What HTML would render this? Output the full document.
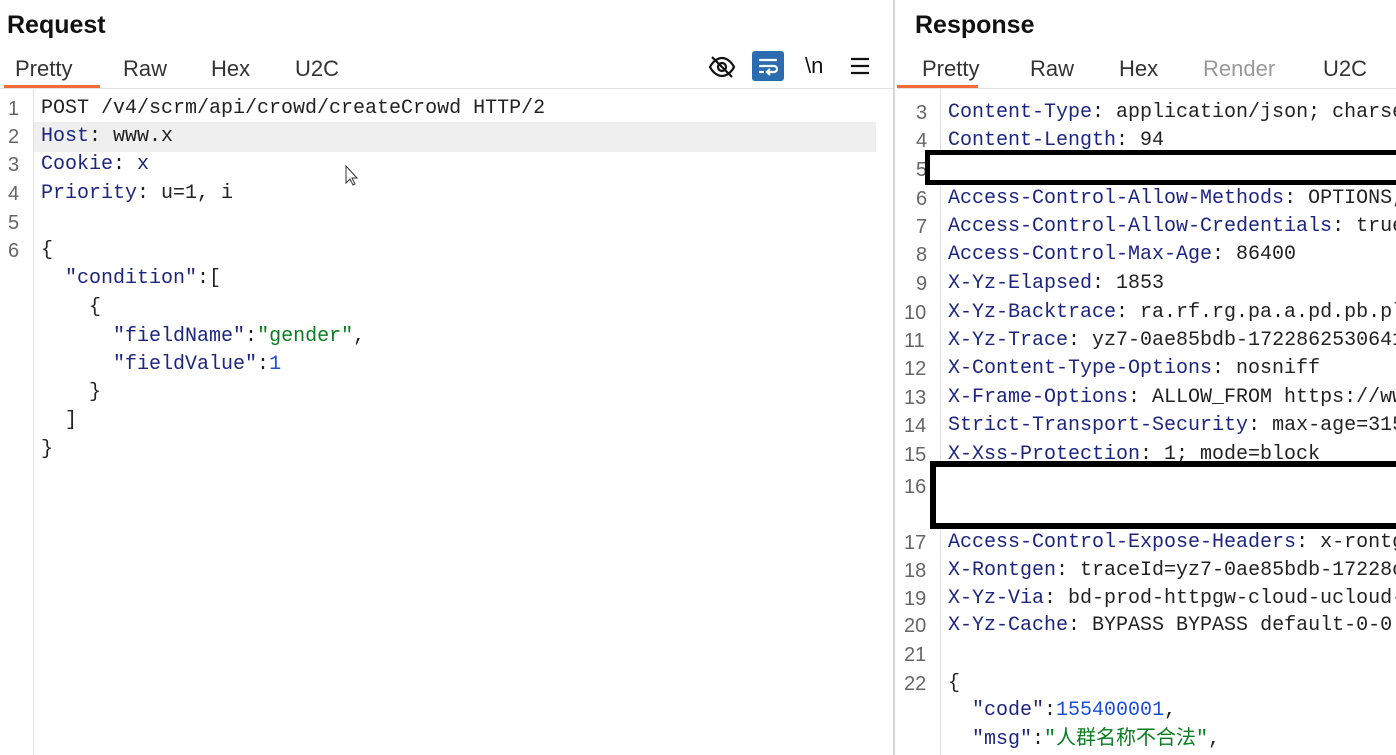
<!DOCTYPE html>
<html><head><meta charset="utf-8"><style>
html,body{margin:0;width:1396px;height:755px;overflow:hidden}
body{background:#fff;font-family:"Liberation Sans",sans-serif;position:relative}
.a{position:absolute;white-space:pre}
.t{font-size:25px;font-weight:bold;color:#111}
.tab{font-size:22px;color:#333}
.m{font-family:"Liberation Mono","Noto Sans CJK SC",monospace;font-size:20px;line-height:28px;color:#222}
.n{font-family:"Liberation Sans",sans-serif;font-size:20px;line-height:28px;color:#666}
.k{color:#1c2580}.s{color:#0a7d20}.v{color:#1a4fd8}
.w{position:absolute;left:0;top:3px;width:1396px;height:755px}
</style></head><body>
<div class="a t" style="left:7px;top:11px">Request</div>
<div class="a t" style="left:915px;top:11px">Response</div>
<div class="a tab" style="left:15px;top:56px">Pretty</div>
<div class="a tab" style="left:123px;top:56px">Raw</div>
<div class="a tab" style="left:211px;top:56px">Hex</div>
<div class="a tab" style="left:295px;top:56px">U2C</div>
<div class="a" style="left:4px;top:85px;width:96px;height:3px;background:#f26b3a"></div>
<div class="a" style="left:0;top:88px;width:893px;height:1px;background:#e2e2e2"></div>
<div class="a tab" style="left:922px;top:56px">Pretty</div>
<div class="a tab" style="left:1030px;top:56px">Raw</div>
<div class="a tab" style="left:1119px;top:56px">Hex</div>
<div class="a tab" style="left:1203px;top:56px;color:#999">Render</div>
<div class="a tab" style="left:1323px;top:56px">U2C</div>
<div class="a" style="left:897px;top:85px;width:81px;height:3px;background:#f26b3a"></div>
<div class="a" style="left:897px;top:88px;width:499px;height:1px;background:#e2e2e2"></div>
<svg class="a" style="left:708px;top:53px" width="28" height="28" viewBox="0 0 28 28" fill="none" stroke="#111" stroke-width="2.2"><path d="M2 14c3-6 8-9 12-9s9 3 12 9c-3 6-8 9-12 9s-9-3-12-9z"/><circle cx="14" cy="14" r="4"/><path d="M4 4l20 20"/></svg>
<div class="a" style="left:752px;top:51px;width:32px;height:30px;background:#2b6cb0;border-radius:3px"></div>
<svg class="a" style="left:752px;top:51px" width="32" height="30" viewBox="0 0 32 30" fill="none" stroke="#fff" stroke-width="2.2"><path d="M7 9h18M7 15h15a3 3 0 010 6h-6M7 21h5"/><path d="M18 18l-3 3 3 3"/></svg>
<div class="a" style="left:805px;top:53px;font-size:22px;color:#111">\n</div>
<svg class="a" style="left:850px;top:57px" width="20" height="18" viewBox="0 0 20 18" stroke="#111" stroke-width="2.2"><path d="M1 2h18M1 9h18M1 16h18"/></svg>
<div class="a" style="left:33px;top:89px;width:1px;height:666px;background:#e0e0e0"></div>
<div class="a" style="left:34px;top:122px;width:842px;height:30px;background:#efefef"></div>
<div class="a" style="left:893px;top:0;width:2px;height:755px;background:#d5d5d5"></div>
<div class="a" style="left:940px;top:89px;width:1px;height:666px;background:#e0e0e0"></div>
<div class="w">
<div class="a n" style="left:8px;top:92px">1</div><div class="a m" style="left:41px;top:92px">POST /v4/scrm/api/crowd/createCrowd HTTP/2</div>
<div class="a n" style="left:8px;top:120px">2</div><div class="a m" style="left:41px;top:120px"><span class="k">Host</span>: www.x</div>
<div class="a n" style="left:8px;top:148px">3</div><div class="a m" style="left:41px;top:148px"><span class="k">Cookie</span>: <span class="k">x</span></div>
<div class="a n" style="left:8px;top:177px">4</div><div class="a m" style="left:41px;top:177px"><span class="k">Priority</span>: u=1, i</div>
<div class="a n" style="left:8px;top:206px">5</div>
<div class="a n" style="left:8px;top:234px">6</div><div class="a m" style="left:41px;top:234px">{</div>
<div class="a m" style="left:41px;top:262px">  <span class="k">"condition"</span>:[</div>
<div class="a m" style="left:41px;top:291px">    {</div>
<div class="a m" style="left:41px;top:320px">      <span class="k">"fieldName"</span>:<span class="s">"gender"</span>,</div>
<div class="a m" style="left:41px;top:348px">      <span class="k">"fieldValue"</span>:<span class="v">1</span></div>
<div class="a m" style="left:41px;top:376px">    }</div>
<div class="a m" style="left:41px;top:404px">  ]</div>
<div class="a m" style="left:41px;top:433px">}</div>
<div class="a n" style="left:916px;top:96px">3</div><div class="a m" style="left:948px;top:96px"><span class="k">Content-Type</span>: application/json; charse</div>
<div class="a n" style="left:916px;top:124px">4</div><div class="a m" style="left:948px;top:124px"><span class="k">Content-Length</span>: 94</div>
<div class="a n" style="left:916px;top:153px">5</div>
<div class="a n" style="left:916px;top:182px">6</div><div class="a m" style="left:948px;top:182px"><span class="k">Access-Control-Allow-Methods</span>: OPTIONS,</div>
<div class="a n" style="left:916px;top:210px">7</div><div class="a m" style="left:948px;top:210px"><span class="k">Access-Control-Allow-Credentials</span>: true</div>
<div class="a n" style="left:916px;top:238px">8</div><div class="a m" style="left:948px;top:238px"><span class="k">Access-Control-Max-Age</span>: 86400</div>
<div class="a n" style="left:916px;top:267px">9</div><div class="a m" style="left:948px;top:267px"><span class="k">X-Yz-Elapsed</span>: 1853</div>
<div class="a n" style="left:904px;top:296px">10</div><div class="a m" style="left:948px;top:296px"><span class="k">X-Yz-Backtrace</span>: ra.rf.rg.pa.a.pd.pb.pl</div>
<div class="a n" style="left:904px;top:324px">11</div><div class="a m" style="left:948px;top:324px"><span class="k">X-Yz-Trace</span>: yz7-0ae85bdb-1722862530641</div>
<div class="a n" style="left:904px;top:352px">12</div><div class="a m" style="left:948px;top:352px"><span class="k">X-Content-Type-Options</span>: nosniff</div>
<div class="a n" style="left:904px;top:381px">13</div><div class="a m" style="left:948px;top:381px"><span class="k">X-Frame-Options</span>: ALLOW_FROM https://ww</div>
<div class="a n" style="left:904px;top:409px">14</div><div class="a m" style="left:948px;top:409px"><span class="k">Strict-Transport-Security</span>: max-age=315</div>
<div class="a n" style="left:904px;top:438px">15</div><div class="a m" style="left:948px;top:438px"><span class="k">X-Xss-Protection</span>: 1; mode=block</div>
<div class="a n" style="left:904px;top:470px">16</div>
<div class="a n" style="left:904px;top:526px">17</div><div class="a m" style="left:948px;top:526px"><span class="k">Access-Control-Expose-Headers</span>: x-rontg</div>
<div class="a n" style="left:904px;top:554px">18</div><div class="a m" style="left:948px;top:554px"><span class="k">X-Rontgen</span>: traceId=yz7-0ae85bdb-17228c</div>
<div class="a n" style="left:904px;top:582px">19</div><div class="a m" style="left:948px;top:582px"><span class="k">X-Yz-Via</span>: bd-prod-httpgw-cloud-ucloud-</div>
<div class="a n" style="left:904px;top:609px">20</div><div class="a m" style="left:948px;top:609px"><span class="k">X-Yz-Cache</span>: BYPASS BYPASS default-0-0</div>
<div class="a n" style="left:904px;top:638px">21</div>
<div class="a n" style="left:904px;top:667px">22</div><div class="a m" style="left:948px;top:667px">{</div>
<div class="a m" style="left:948px;top:694px">  <span class="k">"code"</span>:<span class="v">155400001</span>,</div>
<div class="a m" style="left:948px;top:723px">  <span class="k">"msg"</span>:<span class="s">"人群名称不合法"</span>,</div>
</div>
<div class="a" style="left:925px;top:150px;width:471px;height:35px;box-sizing:border-box;border:5px solid #000;border-right:none;background:#fff"></div>
<div class="a" style="left:930px;top:461px;width:466px;height:68px;box-sizing:border-box;border:6px solid #000;border-right:none;background:#fff"></div>
<svg class="a" style="left:345px;top:165px" width="14" height="22" viewBox="0 0 14 22"><path d="M1 1v17l4-4 3 6 2-1-3-6h5z" fill="#fff" stroke="#333" stroke-width="1"/></svg>
</body></html>
